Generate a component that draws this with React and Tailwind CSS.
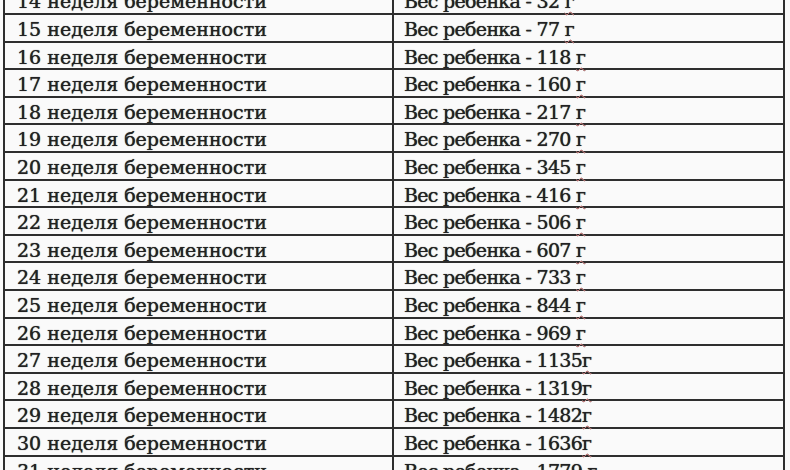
import React from "react";

const rows = [
  [14, "32", " "],
  [15, "77", " "],
  [16, "118", " "],
  [17, "160", " "],
  [18, "217", " "],
  [19, "270", " "],
  [20, "345", " "],
  [21, "416", " "],
  [22, "506", " "],
  [23, "607", " "],
  [24, "733", " "],
  [25, "844", " "],
  [26, "969", " "],
  [27, "1135", ""],
  [28, "1319", ""],
  [29, "1482", ""],
  [30, "1636", ""],
  [31, "1779", " "],
];

const App = () => {
  return (
    <div className="w-[790px] h-[470px] overflow-hidden bg-[#fafafa]">
      <div
        className="ml-[3px] mt-[-12.6px] w-[782px] border-x-2 border-[#2e2e2e] text-[#222] text-[19px] [text-shadow:0_0_0.8px_#222]"
        style={{ fontFamily: '"DejaVu Serif", "Liberation Serif", serif' }}
      >
        {rows.map(([week, grams, gap]) => (
          <div
            key={week}
            className="grid grid-cols-[389px_1fr] h-[27.6px] border-b-2 border-[#2e2e2e]"
          >
            <div className="flex items-center pl-[12px] border-r-2 border-[#2e2e2e] whitespace-nowrap">
              {week} неделя беременности
            </div>
            <div className="flex items-center pl-[10px] whitespace-pre tracking-[-0.7px]">
              <span>
                {`Вес ребенка - ${grams}${gap}`}
                <span className="underline decoration-wavy decoration-[#e08a8a] decoration-1 underline-offset-[3px]">
                  г
                </span>
              </span>
            </div>
          </div>
        ))}
      </div>
    </div>
  );
};

export default App;
